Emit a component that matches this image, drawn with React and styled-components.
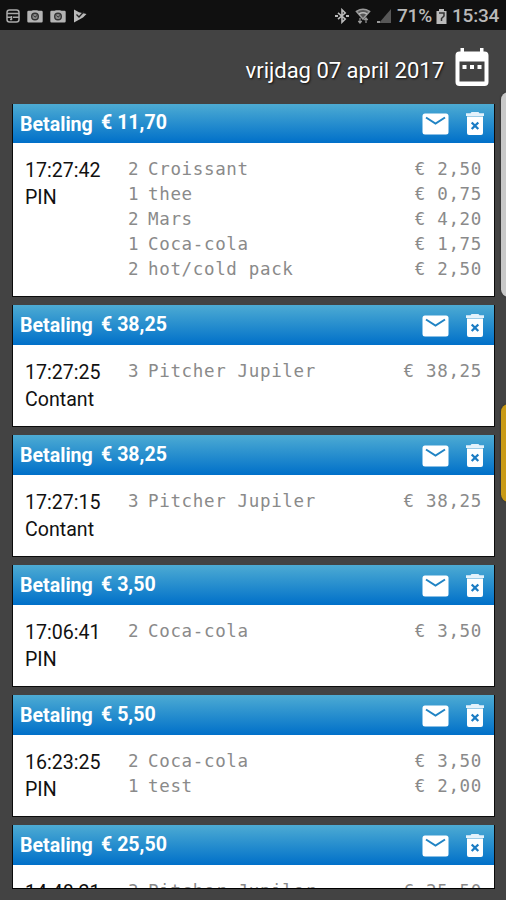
import React from "react";
import styled, { createGlobalStyle } from "styled-components";

const payments = [
  {
    total: "11,70",
    time: "17:27:42",
    method: "PIN",
    headHeight: 39,
    height: 153,
    items: [
      { count: 2, name: "Croissant", price: "2,50" },
      { count: 1, name: "thee", price: "0,75" },
      { count: 2, name: "Mars", price: "4,20" },
      { count: 1, name: "Coca-cola", price: "1,75" },
      { count: 2, name: "hot/cold pack", price: "2,50" },
    ],
  },
  {
    total: "38,25",
    time: "17:27:25",
    method: "Contant",
    items: [{ count: 3, name: "Pitcher Jupiler", price: "38,25" }],
  },
  {
    total: "38,25",
    time: "17:27:15",
    method: "Contant",
    items: [{ count: 3, name: "Pitcher Jupiler", price: "38,25" }],
  },
  {
    total: "3,50",
    time: "17:06:41",
    method: "PIN",
    items: [{ count: 2, name: "Coca-cola", price: "3,50" }],
  },
  {
    total: "5,50",
    time: "16:23:25",
    method: "PIN",
    items: [
      { count: 2, name: "Coca-cola", price: "3,50" },
      { count: 1, name: "test", price: "2,00" },
    ],
  },
  {
    total: "25,50",
    time: "14:48:21",
    method: "PIN",
    items: [{ count: 3, name: "Pitcher Jupiler", price: "25,50" }],
  },
];

const GlobalStyle = createGlobalStyle`
  * {
    box-sizing: border-box;
  }
  body {
    margin: 0;
    overflow: hidden;
    background: #434343;
    font-family: Roboto, "Liberation Sans", sans-serif;
  }
`;
const Screen = styled.div`
  position: relative;
  display: flex;
  flex-direction: column;
  width: 506px;
  height: 900px;
  overflow: hidden;
  background: #434343;
`;
const StatusBar = styled.div`
  display: flex;
  align-items: center;
  justify-content: space-between;
  flex: none;
  height: 30px;
  padding: 2px 8px 0 6px;
  background: #101010;
  color: #b9b9b9;
`;
const StatusGroup = styled.div`
  display: flex;
  align-items: center;
  gap: ${(props) => props.$gap}px;
`;
const StatusText = styled.span`
  width: ${(props) => props.$width}px;
  font-size: 19px;
  font-weight: 500;
  line-height: 28px;
  letter-spacing: -0.2px;
  white-space: nowrap;
`;
const DateBar = styled.div`
  display: flex;
  align-items: center;
  justify-content: flex-end;
  flex: none;
  height: 74px;
  padding: 0 16px 0 0;
  color: #fff;
`;
const DateText = styled.span`
  margin: 7px 10px 0 0;
  font-size: 22px;
  text-shadow: 1px 1px 2px #111;
`;
const List = styled.div`
  display: flex;
  flex-direction: column;
  flex: none;
  gap: 8px;
  height: 785px;
  margin: 0 11px 0 12px;
  overflow: hidden;
  border-bottom: 1px solid #000;
`;
const Card = styled.div`
  flex: none;
  border: solid #0b0b0b;
  border-width: 0 1px 1px;
  background: #fff;
`;
const CardHead = styled.div`
  display: flex;
  align-items: center;
  height: ${(props) => props.$height || 40}px;
  padding: 0 10px 0 7px;
  background: linear-gradient(#4dabd3, #0070c9);
  color: #fff;
`;
const Title = styled.span`
  width: 81px;
  padding-top: 1px;
  font-size: 19.6px;
  font-weight: bold;
`;
const Total = styled.span`
  flex: 1;
  padding-bottom: 2px;
  font-size: 19.6px;
  font-weight: bold;
`;
const Actions = styled.div`
  display: flex;
  align-items: center;
  gap: 17px;
  padding-top: 1px;
`;
const CardBody = styled.div`
  display: flex;
  height: ${(props) => props.$height || 81}px;
  padding: 14px 12px 0 12px;
`;
const Info = styled.div`
  width: 103px;
  color: #111;
  font-size: 19.6px;
  line-height: 27px;
`;
const Items = styled.div`
  flex: 1;
`;
const Item = styled.div`
  display: flex;
  height: 25px;
  color: #8a8a8a;
  font-family: "DejaVu Sans Mono", monospace;
  font-size: 17.5px;
  line-height: 24px;
  letter-spacing: 0.66px;
`;
const Count = styled.span`
  width: 20px;
`;
const Name = styled.span`
  flex: 1;
`;
const Price = styled.span`
  white-space: pre;
`;
const EdgeHandle = styled.div`
  position: absolute;
  right: -10px;
  top: ${(props) => props.$top}px;
  width: 15px;
  height: ${(props) => props.$height}px;
  border-radius: 9px;
  background: ${(props) => props.$color};
  box-shadow: 0 0 2px #222;
`;

const NoteIcon = () => (
  <svg width="14" height="14" viewBox="0 0 14 14" fill="none" stroke="#aaa" strokeWidth="1.5">
    <rect x="1" y="1" width="12" height="12" rx="2.5" />
    <path d="M1 4.6h12M1 8.200h4M7 8.200h6M4 10.500h2M5.500 7v4" />
  </svg>
);

const CameraIcon = () => (
  <svg width="16" height="13" viewBox="0 0 16 13">
    <path d="M1.5.8h3L6 .3h4l1.500.5h3q1.200 0 1.200 1.200v9.300q0 1.200-1.200 1.200h-13Q.3 12.500.3 11.300V2Q.3.800 1.500.800z" fill="#b4b4b4" />
    <circle cx="8" cy="6.500" r="3.300" fill="#888" stroke="#333" strokeWidth="1.400" />
    <path d="M6.500 5.500l1.500 1.700 2-1.700" fill="none" stroke="#333" />
  </svg>
);

const PlayIcon = () => (
  <svg width="14" height="14" viewBox="0 0 14 14">
    <path d="M1 .5L6 3.300 13.500 5 10 8.500 1 13.500z" fill="#bbb" />
    <path d="M3.500 5.500L6 8l5-5.500" fill="none" stroke="#222" strokeWidth="1.300" />
  </svg>
);

const BluetoothIcon = () => (
  <svg width="16" height="16" viewBox="0 0 16 16" fill="none" stroke="#bbb" strokeWidth="1.600">
    <path d="M4 4.800l7.200 6.200L8 14.200V1.800L11.200 5 4 11.200" />
    <path d="M1 8h3M12 8h3" strokeWidth="2" />
  </svg>
);

const WifiIcon = () => (
  <svg width="16" height="16" viewBox="0 0 16 16" fill="none" stroke="#999" strokeWidth="1.600">
    <path d="M1.500 3.500Q8-1 14.500 3.500L8 11z" fill="#555" />
    <path d="M4 6q4-2.500 8 0" stroke="#bbb" />
    <path d="M5 10v5M3.300 13L5 15l1.700-2M11 15v-5M9.300 12l1.700-2 1.700 2" strokeWidth="1.200" />
  </svg>
);

const SignalIcon = () => (
  <svg width="16" height="15" viewBox="0 0 16 15">
    <path d="M15 0v14H3z" fill="#575757" />
    <path d="M1 12h3v2H1z" fill="#999" />
  </svg>
);

const BatteryIcon = () => (
  <svg width="11" height="15" viewBox="0 0 11 15">
    <path d="M3 0h5v2h2.500v13H.5V2H3z" fill="#bbb" />
    <path d="M3 4h5v3L5.500 9.500V12" fill="none" stroke="#333" strokeWidth="1.500" />
  </svg>
);

const CalendarIcon = () => (
  <svg width="36" height="40" viewBox="0 0 36 40">
    <path
      d="M6.500 1h3.500v3.500h16V1h3.500v3.500h1q4 0 4 4V35q0 4-4 4H5.500q-4 0-4-4V8.500q0-4 4-4h1zM5.500 14.500v20h25v-20z"
      fill="#fff"
      fillRule="evenodd"
    />
    <path d="M8.500 18h4v4h-4zM16 18h4v4h-4zM23.500 18h4v4h-4z" fill="#fff" />
  </svg>
);

const MailIcon = () => (
  <svg width="27" height="22" viewBox="0 0 27 22">
    <rect x=".5" y=".5" width="26" height="21" rx="2.500" fill="#fff" />
    <path d="M4 4.500l9.500 6L23 4.500" fill="none" stroke="#2184c4" strokeWidth="2" />
  </svg>
);

const TrashIcon = () => (
  <svg width="18" height="24" viewBox="0 0 18 24">
    <path d="M5.500 0h7l1 1.300H18V4H0V1.300h4.500z" fill="#e4f2fb" />
    <path d="M1 4.500h16V21q0 2-2 2H3q-2 0-2-2z" fill="#fff" />
    <path d="M5.700 10.500l6.600 6.500M12.300 10.500L5.700 17" stroke="#1b7cc4" strokeWidth="2.300" />
  </svg>
);

const PaymentCard = ({ payment }) => {
  return (
    <Card>
      <CardHead $height={payment.headHeight}>
        <Title>Betaling</Title>
        <Total>€ {payment.total}</Total>
        <Actions>
          <MailIcon />
          <TrashIcon />
        </Actions>
      </CardHead>
      <CardBody $height={payment.height}>
        <Info>
          <div>{payment.time}</div>
          <div>{payment.method}</div>
        </Info>
        <Items>
          {payment.items.map((item) => (
            <Item key={item.name}>
              <Count>{item.count}</Count>
              <Name>{item.name}</Name>
              <Price>€ {item.price}</Price>
            </Item>
          ))}
        </Items>
      </CardBody>
    </Card>
  );
};

const App = () => {
  return (
    <Screen>
      <GlobalStyle />
      <StatusBar>
        <StatusGroup $gap={7}>
          <NoteIcon />
          <CameraIcon />
          <CameraIcon />
          <PlayIcon />
        </StatusGroup>
        <StatusGroup $gap={5}>
          <BluetoothIcon />
          <WifiIcon />
          <SignalIcon />
          <StatusText $width={34}>71%</StatusText>
          <BatteryIcon />
          <StatusText $width={46}>15:34</StatusText>
        </StatusGroup>
      </StatusBar>
      <DateBar>
        <DateText>vrijdag 07 april 2017</DateText>
        <CalendarIcon />
      </DateBar>
      <List>
        {payments.map((payment) => (
          <PaymentCard key={payment.time} payment={payment} />
        ))}
      </List>
      <EdgeHandle $top={92} $height={205} $color="#c8c8c8" />
      <EdgeHandle $top={404} $height={98} $color="#c99a16" />
    </Screen>
  );
};

export default App;
